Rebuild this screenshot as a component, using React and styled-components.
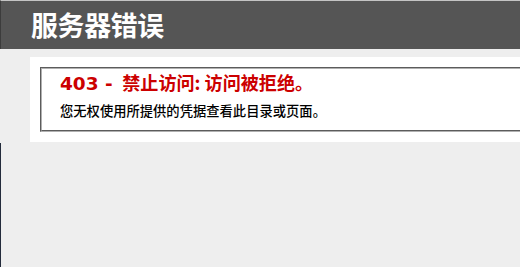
import React from "react";
import styled, { createGlobalStyle } from "styled-components";

const Global = createGlobalStyle`
  html, body { margin: 0; padding: 0; overflow: hidden; }
  body {
    font-size: 11.2px;
    font-family: Verdana, "DejaVu Sans", "Noto Sans CJK SC", sans-serif;
    background:
      linear-gradient(#eeeeee 0 143px, #232b3b 143px) left top / 1px 100% no-repeat,
      #eeeeee;
    height: 267px;
  }
`;

const Page = styled.div`
  width: 1500px;
`;

const Header = styled.div`
  box-sizing: border-box;
  height: 49px;
  padding: 6px 30px 6px 30px;
  border-top: 1px solid #c4c4c4;
  border-left: 1px solid #3c3c3c;
  background-color: #555555;
  color: #fff;
  display: flex;
  align-items: center;
`;

const Title = styled.h1`
  margin: 0;
  font-size: 26.9px;
  font-weight: bold;
  color: #fff;
  font-family: "Noto Sans CJK SC", "DejaVu Sans", sans-serif;
  line-height: 36px;
  letter-spacing: -0.3px;
`;

const Content = styled.div`
  margin: 8px 0 0 30px;
`;

const Container = styled.div`
  background: #fff;
  width: 1440px;
  padding: 10px;
  box-sizing: border-box;
`;

const Fieldset = styled.fieldset`
  margin: 0;
  padding: 0 15px 11px 18px;
  border: 2px groove #b0b0b0;
  min-width: 0;
`;

const Heading = styled.h2`
  margin: 0;
  padding-top: 1px;
  font-size: 18.5px;
  line-height: 25px;
  font-weight: bold;
  color: #cc0000;
  font-family: Verdana, "DejaVu Sans", "Noto Sans CJK SC", sans-serif;
`;

const HeadingText = styled.span`
  margin-left: 3px;
  font-family: "Noto Sans CJK SC", sans-serif;
  font-size: 18.1px;
  font-weight: 700;
`;

const Message = styled.h3`
  margin: 6px 0 0 0;
  font-size: 13.3px;
  line-height: 17px;
  font-weight: 500;
  color: #000;
  font-family: "Noto Sans CJK SC", sans-serif;
`;

export default function App() {
  return (
    <>
      <Global />
      <Page>
        <Header>
          <Title>服务器错误</Title>
        </Header>
        <Content>
          <Container>
            <Fieldset>
              <Heading>
                403 - <HeadingText>禁止访问: 访问被拒绝。</HeadingText>
              </Heading>
              <Message>您无权使用所提供的凭据查看此目录或页面。</Message>
            </Fieldset>
          </Container>
        </Content>
      </Page>
    </>
  );
}
